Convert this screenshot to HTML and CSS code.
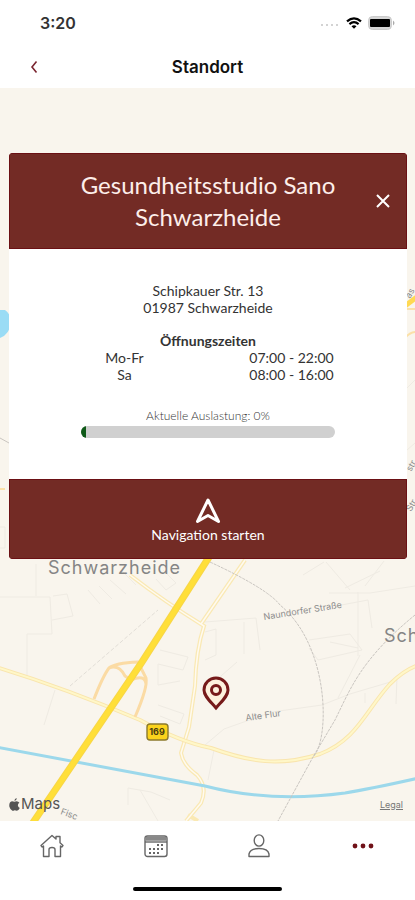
FILE: index.html
```html
<!doctype html>
<html lang="de">
  <head>
    <meta charset="UTF-8" />
    <meta name="viewport" content="width=device-width, initial-scale=1.0" />
    <title>Standort</title>
    <link rel="stylesheet" href="styles.css">
  </head>
  <body>
    <div class="statusBar">
      <span class="clock">3:20</span>
      <div class="statusIcons">
        <svg width="20" height="6" viewBox="0 0 20 6" fill="#c4c4c4">
          <circle cx="2" cy="5" r="1" /><circle cx="7" cy="5" r="1" />
          <circle cx="12" cy="5" r="1" /><circle cx="17" cy="5" r="1" />
        </svg>
        <svg width="16" height="12" viewBox="0 0 16 12" fill="none" stroke="#000" stroke-width="2.2">
          <path d="M1 4.4Q8 -1.8 15 4.4" />
          <path d="M3.4 7.2Q8 3.2 12.6 7.2" />
          <path d="M8 11.8L5.5 9.2Q8 7.2 10.5 9.2Z" fill="#000" stroke="none" />
        </svg>
        <svg width="27" height="14" viewBox="0 0 27 14">
          <rect x="0.5" y="0.5" width="23" height="13" rx="4" fill="#d6d6d6" stroke="#cbcbcb" />
          <rect x="2" y="3" width="20" height="8" rx="1" fill="#000" />
          <path d="M25 4.5Q28 7 25 9.5Z" fill="#aaa" />
        </svg>
      </div>
    </div>

    <header class="titleBar">
      <button class="backButton" aria-label="Zurück">
        <svg width="8" height="14" viewBox="0 0 8 14" fill="none" stroke="#7a2530" stroke-width="1.6">
          <path d="M6.5 1.5L2 7L6.5 12.5" />
        </svg>
      </button>
      <h1>Standort</h1>
    </header>

    <main class="map">
      <svg class="mapCanvas" viewBox="0 88 415 733" preserveAspectRatio="xMidYMid slice" fill="none">
        <!-- Lake and residential outlines -->
        <path d="M0 310H5Q11 314 11 322Q10 334 0 338Z" fill="#9adcf5" />
        <g stroke="#efebe3">
          <path d="M0 597H50L52 634H27V675M36 564V596" />
          <path d="M53 596L67 594L73 616L52 620M88 590L100 604M99 586L112 599M110 580L126 594M122 571L136 585M156 579L166 590L176 583L163 570" />
          <path d="M160 650L188 657L183 670L158 664V685L180 681M158 705L184 714L180 724L160 716M55 690L44 725" />
          <path d="M128 805V788L151 792L170 800M140 790L158 821" />
          <path d="M205 622L256 618L260 650M205 632L216 629V655L205 660M244 622V654M205 690L237 662" />
          <path d="M303 575L324 562M326 562L350 590M345 588L380 571M365 586L384 561M329 593H370L415 586M336 606L368 600L372 628M309 640L350 634L362 650L318 660L309 648M330 642L358 648M358 656V592" />
          <path d="M338 698L360 655M365 693V703M397 676L396 704M205 745L224 729L272 712L322 705L350 694L397 680M214 750L208 780" />
          <path d="M0 527H5V548H0" />
          <path d="M407 388L415 380M407 450L415 443" />
        </g>
        <path d="M70 686L158 610" stroke="#e2ded7" stroke-dasharray="4 2" />
        <path d="M0 438L9 443" stroke="#c9c5c0" />

        <!-- Yellow side roads -->
        <g stroke="#fae9b4" stroke-width="4">
          <path d="M130 575Q165 602 204 626Q196 650 195 686L189 727L181 753Q183 765 197 775Q208 787 201 803L186 821M201 624L245 560" />
          <path d="M188 815L198 821" />
        </g>
        <g stroke="#fffaf0" stroke-width="1.5">
          <path d="M130 575Q165 602 204 626Q196 650 195 686L189 727L181 753Q183 765 197 775Q208 787 201 803L186 821M201 624L245 560" />
        </g>
        <path d="M-4 667Q65 688 140 720Q180 742 211 748C250 762 280 767 320 754C357 740 366 710 390 684Q405 669 419 665" stroke="#f9e5ae" stroke-width="4" />
        <path d="M-4 667Q65 688 140 720Q180 742 211 748C250 762 280 767 320 754C357 740 366 710 390 684Q405 669 419 665" stroke="#fff7c8" stroke-width="2" />
        <path d="M405 306L418 296" stroke="#ffd952" stroke-width="5" />
        <path d="M405 309H415M405 338Q410 332 416 332M0 489H5" stroke="#fbe0a8" stroke-width="2" />

        <!-- Junction ramps -->
        <path d="M94 699Q103 676 109 668Q115 663 138 662L146 678Q148 687 135 717M109 668Q119 664 125 676L131 680Q145 674 146 684" stroke="#fbdba4" stroke-width="3" />

        <!-- Canal -->
        <path d="M-4 747L205 786Q270 803 345 793Q370 789 419 778" stroke="#9cd8eb" stroke-width="3" />

        <!-- Railway -->
        <g stroke="#c9c5c0" stroke-dasharray="3 1">
          <path d="M210 562Q268 589 280 605C330 646 330 740 313 757L278 821" />
          <path d="M415 615C360 660 350 690 335 720L313 757" />
        </g>

        <!-- Autobahn -->
        <path d="M211 554L142 662L30 827" stroke="#f8d648" stroke-width="7" />
        <path d="M211 554L142 662L30 827" stroke="#ffdf39" stroke-width="5" />

        <g class="placeName">
          <text x="48" y="574">Schwarzheide</text>
          <text x="384" y="642">Sch</text>
        </g>
        <g class="streetName">
          <text x="264" y="620" transform="rotate(-9 264 620)">Naundorfer Straße</text>
          <text x="246" y="721" transform="rotate(-8 246 721)">Alte Flur</text>
          <text x="60" y="814" transform="rotate(20 60 814)">Fisc</text>
          <text x="410" y="299" transform="rotate(-60 410 299)">as</text>
          <text x="411" y="472" transform="rotate(-60 411 472)">str</text>
          <text x="411" y="512" transform="rotate(-60 411 512)">Str</text>
        </g>

        <rect x="147" y="724" width="21" height="16" rx="3" fill="#fbd31c" stroke="#8c7a2c" stroke-width="1.4" />
        <text class="roadNumber" x="157" y="735">169</text>

        <!-- Studio marker -->
        <g stroke="#761a1a" stroke-width="3">
          <path d="M216 708C210 701 204 696 204 690A12 12 0 0 1 228 690C228 696 222 701 216 708Z" fill="#fdf1dd" />
          <circle cx="216" cy="690" r="4.5" />
        </g>
      </svg>

      <section class="studioCard">
        <div class="cardHeader">
          <h2>Gesundheitsstudio Sano Schwarzheide</h2>
          <button class="closeButton" aria-label="Schließen">
            <svg width="14" height="14" viewBox="0 0 14 14" stroke="#fff" stroke-width="2">
              <path d="M1 1L13 13M13 1L1 13" />
            </svg>
          </button>
        </div>
        <div class="cardBody">
          <address>Schipkauer Str. 13<br>01987 Schwarzheide</address>
          <table class="hours">
            <caption>Öffnungszeiten</caption>
            <tr><td>Mo-Fr</td><td>07:00 - 22:00</td></tr>
            <tr><td>Sa</td><td>08:00 - 16:00</td></tr>
          </table>
          <div class="usage">
            <p id="usageLabel">Aktuelle Auslastung: 0%</p>
            <div class="usageBar" role="progressbar" aria-labelledby="usageLabel" aria-valuenow="0">
              <div class="usageFill"></div>
            </div>
          </div>
        </div>
        <button class="navigateButton">
          <svg width="26" height="26" viewBox="0 0 26 26" fill="none" stroke="#fff" stroke-width="3" stroke-linejoin="round">
            <path d="M13 2L23.5 23.5L13 17.5L2.5 23.5Z" />
          </svg>
          Navigation starten
        </button>
      </section>

      <div class="mapFooter">
        <span class="mapBrand">
          <svg width="11" height="13" viewBox="0 0 11 13" fill="#555">
            <path d="M7.8 0Q7.8 2.4 5.4 3Q5.4 .7 7.8 0ZM5.5 3.8Q6.3 3.2 7.6 3.2Q9.4 3.2 10.4 4.7Q8.7 5.8 8.9 7.6Q9.1 9.3 10.8 10Q9.3 12.9 7.8 12.8Q6.6 12.2 5.6 12.3Q4.3 12.9 3.4 12.8Q1.3 12.1 .4 8.8Q-.3 4 3 3.2Q4.2 3.2 5.5 3.8Z" />
          </svg>Maps
        </span>
        <a class="legal" href="#">Legal</a>
      </div>
    </main>

    <nav class="tabBar">
      <a href="#" aria-label="Start">
        <svg width="24" height="24" viewBox="0 0 24 24" fill="none" stroke="#666" stroke-width="1.4" stroke-linejoin="round">
          <path d="M1 11.5L12 1.5L16 5V2.5H20V8.8L23 11.5L21.8 13L20.5 12V22.5H15V15.5Q15 13.5 12 13.5Q9 13.5 9 15.5V22.5H3.5V12L2.2 13Z" />
        </svg>
      </a>
      <a href="#" aria-label="Kalender">
        <svg width="24" height="24" viewBox="0 0 24 24" fill="none" stroke="#666" stroke-width="1.4">
          <rect x="1" y="2" width="22" height="20.5" rx="2.5" />
          <path d="M2 3.5H22V6H2Z" fill="#888" stroke="#888" />
          <path d="M1 8H23" />
          <path d="M13 11H20M5 15H20M5 19H16" stroke-width="2" stroke-dasharray="2 2" />
        </svg>
      </a>
      <a href="#" aria-label="Profil">
        <svg width="24" height="24" viewBox="0 0 24 24" fill="none" stroke="#666" stroke-width="1.4" stroke-linejoin="round">
          <ellipse cx="12" cy="6.5" rx="4.8" ry="5.6" />
          <path d="M2 22.5V20Q3 14.5 12 14.5Q21 14.5 22 20V22.5Z" />
        </svg>
      </a>
      <a href="#" aria-label="Mehr">
        <svg width="24" height="24" viewBox="0 0 24 24" fill="#701118">
          <circle cx="4" cy="12" r="2.4" /><circle cx="12" cy="12" r="2.4" /><circle cx="20" cy="12" r="2.4" />
        </svg>
      </a>
    </nav>
    <div class="homeIndicator"></div>
  </body>
</html>
```

FILE: styles.css
```css
/* Base Reset & Styles */
* {
  box-sizing: border-box;
  margin: 0;
  padding: 0;
}
body {
  font-family: Lato, sans-serif;
  background-color: #fff;
  color: #333;
  min-height: 100vh;
  display: flex;
  flex-direction: column;
}
svg {
  display: block;
}
button {
  font: inherit;
  border: none;
  background: none;
  cursor: pointer;
}
/* Status bar */
.statusBar {
  display: flex;
  justify-content: space-between;
  align-items: center;
  height: 46px;
  padding: 0 20px 0 40px;
}
.clock {
  font-family: Inter, sans-serif;
  font-size: 16px;
  font-weight: 600;
}
.statusIcons {
  display: flex;
  align-items: center;
  gap: 6px;
}
/* Title bar */
.titleBar {
  display: grid;
  grid-template-columns: 68px 1fr 68px;
  align-items: center;
  height: 42px;
}
.titleBar h1 {
  grid-column: 2;
  font-family: Inter, sans-serif;
  font-size: 17px;
  font-weight: 600;
  color: #111;
  text-align: center;
}
.backButton {
  display: flex;
  justify-content: center;
  padding: 12px;
}
/* Map */
.map {
  position: relative;
  flex: 1;
  display: flex;
  flex-direction: column;
  justify-content: space-between;
  padding: 65px 8px 8px 9px;
  background-color: #f9f5ed;
  overflow: hidden;
}
.mapCanvas {
  position: absolute;
  inset: 0;
  width: 100%;
  height: 100%;
}
.placeName {
  font-family: Inter, sans-serif;
  font-size: 18px;
  letter-spacing: 1px;
  fill: #858585;
}
.streetName {
  font-family: Inter, sans-serif;
  font-size: 9px;
  fill: #8c8c8c;
}
.roadNumber {
  font-family: Inter, sans-serif;
  font-size: 9px;
  font-weight: 700;
  text-anchor: middle;
  fill: #4a3d10;
}
/* Studio card */
.studioCard {
  position: relative;
  border-radius: 4px;
  background-color: #fff;
  overflow: hidden;
}
.cardHeader {
  display: grid;
  grid-template-columns: 48px 1fr 48px;
  align-items: center;
  padding: 16px 0;
  background-color: #732b25;
  box-shadow: inset 0 0 0 1px #6b1014;
}
.cardHeader h2 {
  grid-column: 2;
  font-size: 24px;
  font-weight: 400;
  line-height: 32px;
  color: #fdeeea;
  text-align: center;
}
.closeButton {
  display: flex;
  justify-content: center;
  padding: 12px;
}
.cardBody {
  display: flex;
  flex-direction: column;
  gap: 16px;
  padding: 33px 32px 41px;
  font-size: 14px;
  line-height: 17px;
  text-align: center;
}
.cardBody address {
  font-style: normal;
}
.hours {
  width: 100%;
  border-collapse: collapse;
  table-layout: fixed;
}
.hours caption {
  font-weight: 700;
}
.usage {
  padding: 8px 40px 0;
}
.usage p {
  font-size: 12px;
  font-weight: 300;
  margin-bottom: 2px;
}
.usageBar {
  height: 12px;
  border-radius: 6px;
  background-color: #d0d0d0;
  overflow: hidden;
}
.usageFill {
  width: 2%;
  height: 100%;
  background-color: #0f5a18;
}
.navigateButton {
  display: flex;
  flex-direction: column;
  align-items: center;
  gap: 2px;
  width: 100%;
  padding: 19px 0 15px;
  background-color: #732b25;
  box-shadow: inset 0 0 0 1px #6b1014;
  color: #fff;
  font-size: 14px;
  line-height: 18px;
}
/* Map attribution */
.mapFooter {
  position: relative;
  display: flex;
  justify-content: space-between;
  align-items: center;
  font-family: Inter, sans-serif;
  color: #555;
}
.mapBrand {
  display: flex;
  align-items: center;
  gap: 1px;
  font-size: 15px;
  line-height: 18px;
}
.legal {
  padding-right: 4px;
  font-size: 9px;
  color: #777;
}
/* Tab bar */
.tabBar {
  display: grid;
  grid-template-columns: repeat(4, 1fr);
  height: 50px;
}
.tabBar a {
  display: flex;
  justify-content: center;
  align-items: center;
}
.homeIndicator {
  width: 36%;
  height: 4px;
  margin: 16px auto 9px;
  border-radius: 2px;
  background-color: #000;
}
```
